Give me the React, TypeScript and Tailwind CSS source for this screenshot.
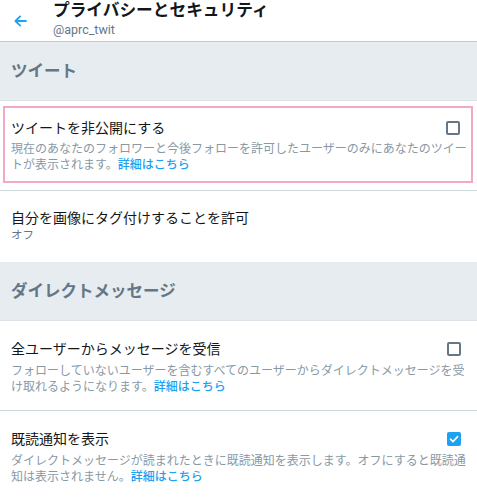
const font = { fontFamily: 'Roboto, "Noto Sans CJK JP", sans-serif' };

const Checkbox = ({ checked }: { checked?: boolean }) =>
  checked ? (
    <div className="w-[14px] h-[14px] rounded-[2px] bg-[#1da1f2] flex items-center justify-center">
      <svg width="10" height="10" viewBox="0 0 10 10" fill="none">
        <path d="M1.5 5.2 L4 7.6 L8.6 2.6" stroke="white" strokeWidth="1.6" strokeLinecap="round" strokeLinejoin="round" />
      </svg>
    </div>
  ) : (
    <div className="w-[14px] h-[14px] rounded-[2px] border-2 border-[#657786]" />
  );

const SectionHeader = ({ title }: { title: string }) => (
  <div className="h-[59px] bg-[#e6ecf0] flex items-center pl-[11px] border-b border-[#dde3e7]">
    <span className="text-[16.5px] font-bold text-[#657786] leading-[20px] mt-[1px]">{title}</span>
  </div>
);

const Link = () => <span className="text-[#1da1f2] font-medium">詳細はこちら</span>;

const CheckRow = ({
  title,
  desc,
  checked,
}: {
  title: string;
  desc: string;
  checked?: boolean;
}) => (
  <div className="pl-[11px] pr-[8px] pt-[18px] pb-[15px] border-b border-[#ccd6dd]">
    <div className="flex items-center justify-between h-[20px]">
      <span className="text-[14px] leading-[20px] text-[#14171a]">{title}</span>
      <div className="mr-[8px]">
        <Checkbox checked={checked} />
      </div>
    </div>
    <p className="mt-[4px] text-[12px] leading-[16px] text-[#8899a6]">
      {desc}
      <Link />
    </p>
  </div>
);

export default function App() {
  return (
    <div className="w-[477px] h-[498px] overflow-hidden bg-white" style={font}>
      <header className="h-[42px] flex items-start border-b border-[#c5cbcf] shadow-[0_1px_1px_rgba(0,0,0,0.05)]">
        <div className="w-[53px] h-[41px] flex items-center pl-[14px]">
          <svg width="13" height="12" viewBox="0 0 13 12" fill="none" className="mt-[1px]">
            <path d="M12 6 H1.8 M6.2 1.4 L1.4 6 L6.2 10.6" stroke="#1da1f2" strokeWidth="1.8" strokeLinecap="round" strokeLinejoin="round" />
          </svg>
        </div>
        <div className="flex flex-col">
          <span className="text-[16.7px] font-bold leading-[21px] text-[#14171a]">プライバシーとセキュリティ</span>
          <span className="text-[12.5px] leading-[14px] mt-[2px] text-[#657786]">@aprc_twit</span>
        </div>
      </header>

      <SectionHeader title="ツイート" />

      <div className="pt-[5px] pb-[7px] border-b border-[#ccd6dd]">
        <div className="ml-[3px] mr-[4px] border-2 border-[#f1a9c6] pl-[6px] pr-[3px] pt-[10px] pb-[8px]">
          <div className="flex items-center justify-between h-[20px]">
            <span className="text-[14px] leading-[20px] text-[#14171a]">ツイートを非公開にする</span>
            <div className="mr-[8px]">
              <Checkbox />
            </div>
          </div>
          <p className="mt-[3px] text-[12px] leading-[16px] text-[#8899a6]">
            現在のあなたのフォロワーと今後フォローを許可したユーザーのみにあなたのツイートが表示されます。
            <Link />
          </p>
        </div>
      </div>

      <div className="pl-[11px] pt-[17px] pb-[19px]">
        <div className="text-[14px] leading-[20px] text-[#14171a]">自分を画像にタグ付けすることを許可</div>
        <div className="text-[11.5px] leading-[15px] text-[#657786]">オフ</div>
      </div>

      <SectionHeader title="ダイレクトメッセージ" />

      <CheckRow
        title="全ユーザーからメッセージを受信"
        desc="フォローしていないユーザーを含むすべてのユーザーからダイレクトメッセージを受け取れるようになります。"
      />
      <CheckRow
        title="既読通知を表示"
        desc="ダイレクトメッセージが読まれたときに既読通知を表示します。オフにすると既読通知は表示されません。"
        checked
      />
    </div>
  );
}
